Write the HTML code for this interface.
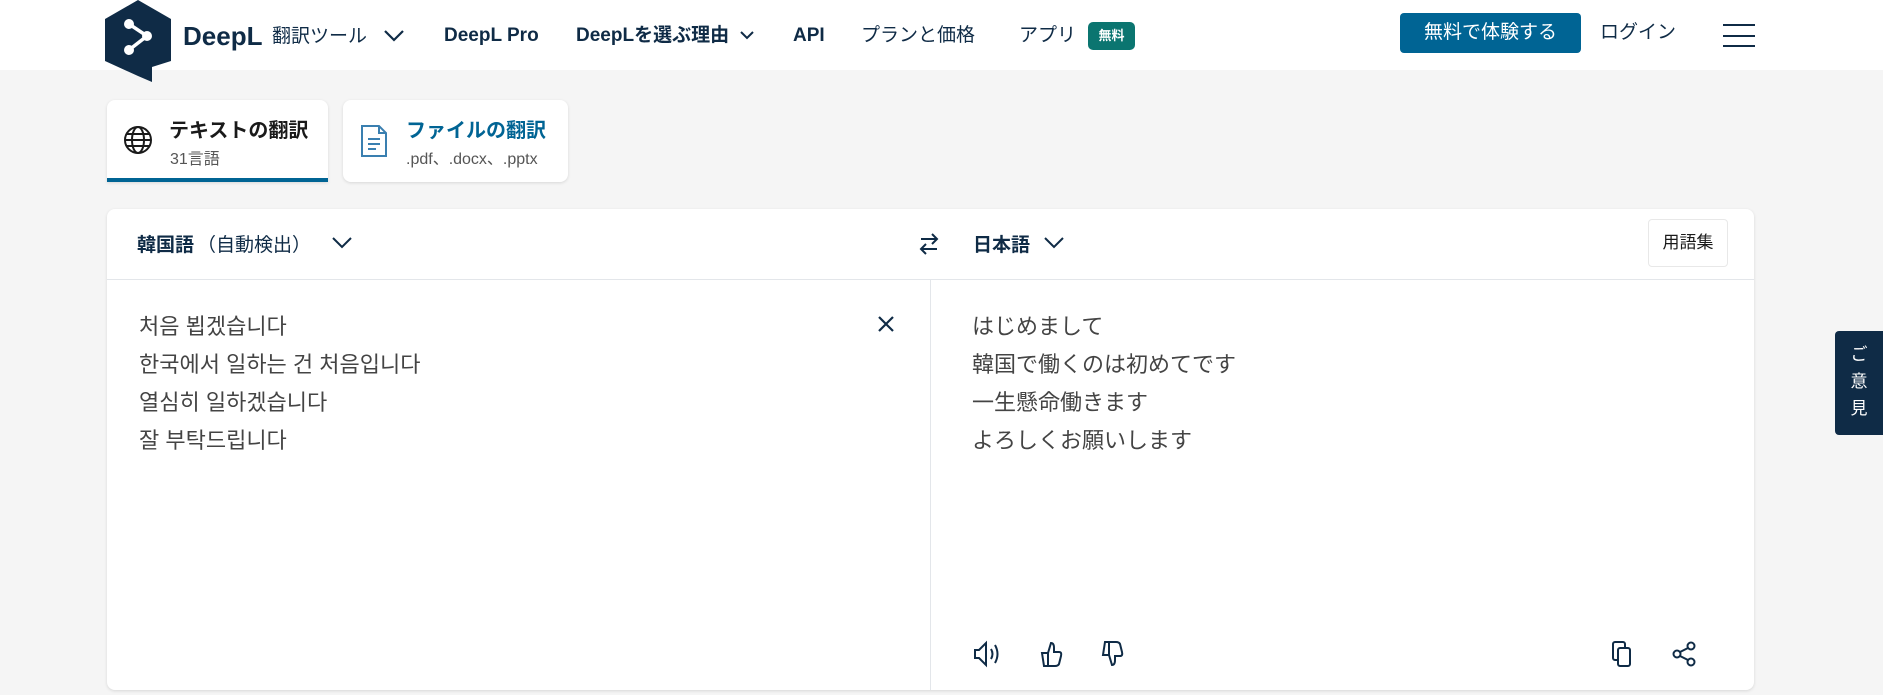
<!DOCTYPE html>
<html><head><meta charset="utf-8"><style>
*{box-sizing:border-box;margin:0;padding:0}
body{width:1883px;height:695px;overflow:hidden;background:#f5f5f5;font-family:"Liberation Sans","Noto Sans CJK JP",sans-serif;color:#0f2b46;position:relative}
.hdr{position:absolute;left:0;top:0;width:1883px;height:70px;background:#fff}
.a{position:absolute;white-space:nowrap}
.nav{font-size:19px;top:22px;height:28px;line-height:28px;color:#0f2b46}
.card{position:absolute;background:#fff;border-radius:8px;box-shadow:0 1px 3px rgba(0,0,0,.12)}
.kr{font-size:22px;color:#444;line-height:38px}
</style></head><body>
<div class="hdr"></div>
<svg class="a" style="left:105px;top:0" width="66" height="82" viewBox="0 0 66 82"><path d="M33 0 L66 19 V61 L47 67 L47 82 L33 76 L0 61 V19 Z" fill="#0f2b46"/><g stroke="#fff" stroke-width="3.5" fill="none"><path d="M24 24 L42 36 L24 50"/></g><circle cx="24" cy="24" r="5" fill="#fff"/><circle cx="42" cy="36" r="5" fill="#fff"/><circle cx="24" cy="50" r="5" fill="#fff"/></svg>
<div class="a" style="left:183px;top:20px;height:32px;line-height:32px;font-size:26px;font-weight:bold;color:#0f2b46">DeepL</div>
<div class="a nav" style="left:272px;top:23px">翻訳ツール</div>
<svg class="a" style="left:383px;top:29px" width="22" height="14"><path d="M2 2 L11 11 L20 2" stroke="#0f2b46" stroke-width="2.2" fill="none"/></svg>
<div class="a nav" style="left:444px;font-weight:bold">DeepL Pro</div>
<div class="a nav" style="left:576px;font-weight:bold">DeepLを選ぶ理由</div>
<svg class="a" style="left:740px;top:31px" width="14" height="10"><path d="M1 1 L7 7 L13 1" stroke="#0f2b46" stroke-width="2" fill="none"/></svg>
<div class="a nav" style="left:793px;font-weight:bold">API</div>
<div class="a nav" style="left:861px">プランと価格</div>
<div class="a nav" style="left:1019px">アプリ</div>
<div class="a" style="left:1088px;top:22px;width:47px;height:28px;background:#0b7570;border-radius:5px;color:#fff;font-size:13px;font-weight:bold;text-align:center;line-height:28px">無料</div>
<div class="a" style="left:1400px;top:13px;width:181px;height:40px;background:#006494;border-radius:4px;color:#fff;font-size:19px;text-align:center;line-height:40px">無料で体験する</div>
<div class="a nav" style="left:1600px;top:19px">ログイン</div>
<div class="a" style="left:1723px;top:24px;width:32px;height:2px;background:#0f2b46"></div>
<div class="a" style="left:1723px;top:35px;width:32px;height:2px;background:#0f2b46"></div>
<div class="a" style="left:1723px;top:45px;width:32px;height:2px;background:#0f2b46"></div>

<div class="card" style="left:107px;top:100px;width:221px;height:82px;border-bottom:4px solid #006494;border-radius:8px 8px 0 0"></div>
<svg class="a" style="left:122px;top:124px" width="32" height="32" viewBox="0 0 32 32" fill="none" stroke="#1a1a1a" stroke-width="2"><circle cx="16" cy="16" r="13"/><ellipse cx="16" cy="16" rx="6" ry="13"/><path d="M3 16H29M5 10H27M5 22H27"/></svg>
<div class="a" style="left:169px;top:114px;font-size:20px;font-weight:bold;color:#1a1a1a">テキストの翻訳</div>
<div class="a" style="left:170px;top:145px;font-size:16px;color:#555">31言語</div>
<div class="card" style="left:343px;top:100px;width:225px;height:82px"></div>
<svg class="a" style="left:360px;top:124px" width="28" height="34" viewBox="0 0 28 34" fill="none" stroke="#3a7fb0" stroke-width="2"><path d="M2 2H19L26 9V32H2Z"/><path d="M19 2V9H26M8 15H20M8 20H20M8 25H16"/></svg>
<div class="a" style="left:406px;top:114px;font-size:20px;font-weight:bold;color:#006494">ファイルの翻訳</div>
<div class="a" style="left:406px;top:145px;font-size:16px;color:#555">.pdf、.docx、.pptx</div>

<div class="card" style="left:107px;top:209px;width:1647px;height:481px"></div>
<div class="a" style="left:107px;top:279px;width:1647px;height:1px;background:#e3e6ea"></div>
<div class="a" style="left:930px;top:280px;width:1px;height:410px;background:#e3e6ea"></div>
<div class="a" style="left:137px;top:230px;font-size:19px;font-weight:bold;color:#0f2b46">韓国語</div>
<div class="a" style="left:197px;top:230px;font-size:19px;color:#0f2b46">（自動検出）</div>
<svg class="a" style="left:331px;top:236px" width="22" height="14"><path d="M2 2 L11 11 L20 2" stroke="#0f2b46" stroke-width="2" fill="none"/></svg>
<svg class="a" style="left:915px;top:230px" width="28" height="28" viewBox="0 0 28 28" fill="none" stroke="#0f2b46" stroke-width="2"><path d="M6 9H22M17 4L22 9L17 14M22 19H6M11 14L6 19L11 24"/></svg>
<div class="a" style="left:973px;top:230px;font-size:19px;font-weight:bold;color:#0f2b46">日本語</div>
<svg class="a" style="left:1043px;top:236px" width="22" height="14"><path d="M2 2 L11 11 L20 2" stroke="#0f2b46" stroke-width="2" fill="none"/></svg>
<div class="a" style="left:1648px;top:219px;width:80px;height:48px;border:1px solid #e8e8e8;border-radius:4px;font-size:17px;color:#1a1a1a;text-align:center;line-height:46px">用語集</div>

<div class="a kr" style="left:139px;top:308px;font-family:'Liberation Sans','Noto Sans CJK KR',sans-serif">처음 뵙겠습니다<br>한국에서 일하는 건 처음입니다<br>열심히 일하겠습니다<br>잘 부탁드립니다</div>
<svg class="a" style="left:877px;top:315px" width="18" height="18"><path d="M2 2L16 16M16 2L2 16" stroke="#0f2b46" stroke-width="2.2"/></svg>
<div class="a kr" style="left:972px;top:308px">はじめまして<br>韓国で働くのは初めてです<br>一生懸命働きます<br>よろしくお願いします</div>

<svg class="a" style="left:973px;top:640px" width="30" height="28" viewBox="0 0 30 28" fill="none" stroke="#0f2b46" stroke-width="2"><path d="M2 10H6L13 3V25L6 18H2Z"/><path d="M18 9Q21 14 18 19M22 5Q27 14 22 23"/></svg>
<svg class="a" style="left:1038px;top:640px" width="26" height="28" viewBox="0 0 26 28" fill="none" stroke="#0f2b46" stroke-width="2"><path d="M4 13H10V26H6Z M10 13L13 3Q16 3 16 8V12H21Q24 12 23 16L21 24Q20 26 17 26H10"/></svg>
<svg class="a" style="left:1099px;top:640px" width="26" height="28" viewBox="0 0 26 28" fill="none" stroke="#0f2b46" stroke-width="2"><path d="M4 15H10V2H6Z M10 15L13 25Q16 25 16 20V16H21Q24 16 23 12L21 4Q20 2 17 2H10"/></svg>
<svg class="a" style="left:1610px;top:640px" width="24" height="28" viewBox="0 0 24 28" fill="none" stroke="#0f2b46" stroke-width="2"><rect x="3" y="2" width="12" height="18" rx="2"/><rect x="8" y="8" width="12" height="18" rx="2" fill="#fff"/></svg>
<svg class="a" style="left:1671px;top:640px" width="28" height="28" viewBox="0 0 28 28" fill="none" stroke="#0f2b46" stroke-width="2"><circle cx="20" cy="6" r="3.5"/><circle cx="6" cy="14" r="3.5"/><circle cx="20" cy="22" r="3.5"/><path d="M9 12L17 8M9 16L17 20"/></svg>

<div class="a" style="left:1835px;top:331px;width:48px;height:104px;background:#0f2b46;border-radius:4px 0 0 4px;color:#fff;font-size:17px;line-height:27px;text-align:center;padding-top:10px">ご<br>意<br>見</div>
</body></html>
